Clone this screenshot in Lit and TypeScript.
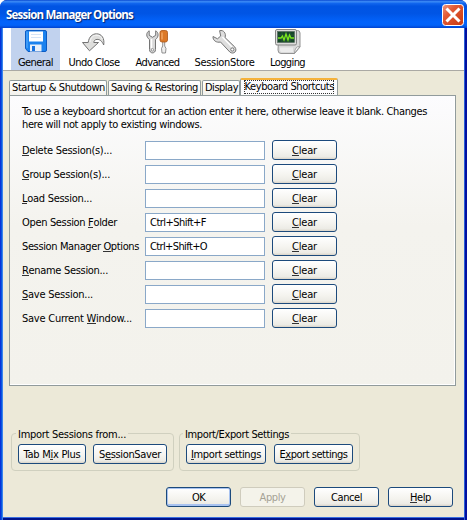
import { LitElement, html, css, svg, nothing } from "lit";
import { customElement, property } from "lit/decorators.js";

/** One line of text set to a given width; "_" precedes the access key. */
@customElement("ui-text")
class UiText extends LitElement {
  @property() text = "";
  @property({ type: Number }) w = 0;
  static styles = css`
    :host { display: block; white-space: pre; flex: none; line-height: 13px; }
    .run { display: inline-block; }
    u { text-decoration: none; box-shadow: 0 1px 0 #333; display: inline-block; height: 11px; line-height: 13px; vertical-align: top; }
  `;
  updated() {
    const run = this.renderRoot.querySelector(".run") as HTMLElement;
    run.style.letterSpacing = "0";
    const n = this.text.replace("_", "").length;
    if (this.w) run.style.letterSpacing = (this.w - run.getBoundingClientRect().width) / n + "px";
  }
  render() {
    const i = this.text.indexOf("_");
    return html`<span class="run">${i < 0
      ? this.text
      : html`${this.text.slice(0, i)}<u>${this.text[i + 1]}</u>${this.text.slice(i + 2)}`}</span>`;
  }
}

@customElement("ui-button")
class UiButton extends LitElement {
  @property() text = "";
  @property({ type: Number }) w = 0;
  @property({ reflect: true }) kind = "";
  static styles = css`
    :host { display: flex; align-items: center; justify-content: center; box-sizing: border-box; width: 65px; height: 20px; flex: none;
      border: 1px solid #1c4a7c; border-radius: 3px; color: #000;
      background: linear-gradient(#fff, #f4f3ee 60%, #ecebe5 88%, #d9d3c8); }
    :host([kind="default"]) { box-shadow: inset 0 0 0 1px #a9c3f0, inset 0 -2px #a9c3f0; }
    :host([kind="off"]) { border-color: #cfccbd; background: #f4f3ea; color: #a5a294; }
  `;
  render() { return html`<ui-text .text=${this.text} .w=${this.w}></ui-text>`; }
}

const floppy = svg`
  <path d="M4.500 2.500H23Q24.500 2.500 24.500 4V22Q24.500 23.500 23 23.500H6L3.500 20.500V4Q3.500 2.500 4.500 2.500Z" fill="#1b82ee" stroke="#0b5bc4"/>
  <path d="M4.500 3.500H5.500V20.500L4.500 19.500Z" fill="#5fb2ff"/>
  <path d="M7 3.500H21V13.500H7Z" fill="#fff"/><path d="M9 6.500H19M9 9.500H19" stroke="#d5e4f7"/>
  <path d="M8 16.500H19.500V23.500H8Z" fill="#e9eff8"/><path d="M10 18H13V23H10Z" fill="#1672df"/>`;
const undo = svg`
  <path d="M2.500 14.500L8.200 14.500C9 8.500 12.500 5.800 16.500 5.800C21.500 5.800 24.800 10 23.700 17C22 13 19.600 11.200 17 11.400C14.700 11.600 14 12.800 13.800 14.500L18.500 14.500L9.500 22.800Z" fill="#dededc" stroke="#747474" stroke-linejoin="round"/>
  <path d="M10 14C10.500 9.500 13.500 7 17 7.200C19.500 7.300 21.500 9 22.200 11" fill="none" stroke="#f8f8f8"/>`;
const advanced = svg`
  <path d="M5.200 2.800C2 4.500 1.800 9 5.500 11.500V21.500C5.500 26 11.500 26 11.500 21.500V11.500C15 9 14.800 4.500 11.700 2.800V7.300L8.500 9.300L5.200 7.300Z" fill="#d9d9d9" stroke="#747474" stroke-linejoin="round"/>
  <path d="M7.500 11V20" stroke="#fff" stroke-width="1.500"/><circle cx="8.500" cy="21.800" r="1.200" fill="#fff" stroke="#777" stroke-width=".7"/>
  <path d="M18.700 13H20.700V18L22 20.500L21.500 25H18L17.500 20.500L18.700 18Z" fill="#eee" stroke="#777" stroke-width=".8"/>
  <rect x="16" y="2.500" width="7.500" height="11.500" rx="2" fill="#dc7928" stroke="#aa5518" stroke-width=".8"/>
  <path d="M18 4.500V11.500" stroke="#f5ad6c" stroke-width="1.300"/>`;
const wrench = svg`
  <path d="M8.600 2.700C12.500 1.500 15.500 5.500 14 9.500L23.800 19C27 23 22.500 27 18.800 24L9.500 14C5.500 15 1.700 12.500 2 8.500L6.500 10.800L9.700 8Z" fill="#dedede" stroke="#747474" stroke-linejoin="round"/>
  <path d="M11.500 9L21 19" stroke="#fff" stroke-width="1.400"/><circle cx="21.300" cy="21.500" r="1.600" fill="#fff" stroke="#777"/>`;
const logging = svg`
  <path d="M5 2.500H23.500Q26 2.500 26 5V19L20.500 25.500H7Q4 25.500 4 22Z" fill="#dadada" stroke="#929292"/>
  <path d="M6 19.500H19V24H7.500Q6 24 6 22Z" fill="#ececec"/>
  <path d="M25.800 18.500Q21 18 20.500 25.300Z" fill="#fff" stroke="#929292" stroke-width=".8"/>
  <rect x="1.500" y="1.500" width="21" height="15.500" rx="1.500" fill="#dcdcda" stroke="#858585"/>
  <rect x="3.500" y="3.500" width="17" height="11" fill="#174529" stroke="#51665a" stroke-width=".6"/>
  <path d="M4 7H20M4 11H20M8 4V14M12 4V14M16 4V14" stroke="#2e6440" stroke-width=".6"/>
  <path d="M4 10H7L8.500 8L10 12L12 6L14 12L15.500 7L17 10H20" fill="none" stroke="#7be81e" stroke-width="1.300"/>`;

const tools = [
  { cls: "general on", text: "General", w: 35, icon: floppy },
  { cls: "undo", text: "Undo Close", w: 51, icon: undo },
  { cls: "advanced", text: "Advanced", w: 44, icon: advanced },
  { cls: "store", text: "SessionStore", w: 60, icon: wrench },
  { cls: "logging", text: "Logging", w: 35, icon: logging },
];
const tabs = [
  { cls: "t1", text: "Startup & Shutdown", w: 93 },
  { cls: "t2", text: "Saving & Restoring", w: 87 },
  { cls: "t3", text: "Display", w: 33 },
  { cls: "t4 sel", text: "Keyboard Shortcuts", w: 89.5 },
];
const rows: [string, number, string, number][] = [
  ["_Delete Session(s)...", 90, "", 0],
  ["_Group Session(s)...", 88, "", 0],
  ["_Load Session...", 70, "", 0],
  ["Open Session _Folder", 95, "Ctrl+Shift+F", 56],
  ["Session Manager _Options", 117, "Ctrl+Shift+O", 57],
  ["_Rename Session...", 86, "", 0],
  ["_Save Session...", 71, "", 0],
  ["Save Current _Window...", 110, "", 0],
];

@customElement("app-root")
class AppRoot extends LitElement {
  static styles = css`
    :host { display: block; width: 467px; height: 520px; background: #fff; overflow: hidden; color: #000;
      font: 11px/13px "DejaVu Sans Condensed", "DejaVu Sans", sans-serif; font-stretch: condensed; }
    * { box-sizing: border-box; }
    .win { display: flex; flex-direction: column; height: 520px; border-radius: 7px 7px 0 0; overflow: hidden;
      background: linear-gradient(90deg, #0831d9 0 1px, #0855dd 1px 2px, #3b82ee 2px 3px, #0000 3px calc(100% - 3px), #2a5fd6 calc(100% - 3px) calc(100% - 2px), #0010a0 calc(100% - 2px)), #00138c; }
    .title { flex: none; height: 28px; display: flex; align-items: center; justify-content: space-between; padding: 2px 3px 0 6px;
      background: linear-gradient(#0a4ad2, #3c8cf7 6%, #1166ee 12%, #0054e3 22%, #0055e5 48%, #0263fb 78%, #0262f8 90%, #0143cf); }
    .title ui-text { font: bold 11.5px/15px "Open Sans", "Noto Sans", sans-serif; font-stretch: normal; color: #fff; text-shadow: 1px 1px 1px #0a246a; margin-top: -1px; }
    .close { display: block; flex: none; }
    .body { flex: 1; margin: 0 3px 3px; background: #ece9d8; display: flex; flex-direction: column; align-items: flex-start; box-shadow: 0 1px #3b6fe0; }
    .tools { align-self: stretch; height: 43px; flex: none; background: #fff; border-bottom: 1px solid #aaa9a4; display: flex; padding-left: 8px; }
    .tool { display: flex; flex-direction: column; align-items: center; height: 42px; flex: none; }
    .tool svg { display: block; flex: none; }
    .tool ui-text { margin-top: 1px; }
    .on { background: #c1d2ee; }
    .general { width: 49px; }
    .undo { width: 68px; }
    .advanced { width: 59px; }
    .store { width: 75px; }
    .logging { width: 51px; }
    .tabs { display: flex; align-items: flex-end; height: 17px; margin: 7px 0 0 6px; flex: none; }
    .tab { height: 15px; border: 1px solid #919b9c; border-bottom: 0; border-radius: 2px 2px 0 0; background: linear-gradient(#fff, #f3f2ed); padding-left: 2px; }
    .t1 { width: 98px; margin-right: 1px; }
    .t2 { width: 93px; margin-right: 1px; }
    .t3 { width: 38px; }
    .sel { width: 98px; height: 17px; border-top: 2px solid #f5b23a; background: #fcfcfe; padding: 0 3px; }
    .focus { height: 14px; border: 1px dotted #333; }
    .focus ui-text { margin: -1px 0 0 -.5px; }
    .panel { width: 447px; height: 291px; flex: none; margin-left: 6px; border: 1px solid #919b9c; box-shadow: inset -1px -1px #fff; padding: 9px 0 0 12px;
      background: linear-gradient(#fcfcfe, #f4f3ee 45%, #f3f2ec); }
    .rows { display: grid; gap: 4px; margin-top: 9px; }
    .row { display: flex; align-items: center; height: 20px; }
    .label { width: 123px; flex: none; }
    .field { width: 120px; height: 19px; border: 1px solid #8aa8c8; background: #fff; padding: 2px 4px; margin-right: 7px; }
    .groups { display: flex; gap: 5px; margin: 39px 0 0 8px; }
    .group { position: relative; height: 46px; padding-top: 8px; }
    .box { height: 38px; border: 1px solid #d0d0bf; border-radius: 4px; display: flex; justify-content: space-between; padding: 10px 6px 0; }
    .g1 { width: 163px; }
    .g2 { width: 181px; }
    .legend { position: absolute; left: 5px; top: 3px; background: #ece9d8; padding: 0 2px; }
    .g2 .legend { left: 4px; }
    .b1 { width: 68px; } .b2 { width: 74px; } .b3 { width: 80px; } .b4 { width: 79px; }
    .actions { display: flex; gap: 9px; margin: 16px 0 0 163px; }
  `;
  render() {
    return html`<div class="win">
      <div class="title">
        <ui-text .text=${"Session Manager Options"} .w=${127}></ui-text>
        <svg class="close" width="22" height="22" viewBox="0 0 22 22">
          <defs><linearGradient id="r" x2="1" y2="1"><stop stop-color="#f09a80"/><stop offset=".35" stop-color="#e25a35"/><stop offset="1" stop-color="#c8380f"/></linearGradient></defs>
          <rect x=".500" y=".500" width="21" height="21" rx="3" fill="url(#r)" stroke="#fff"/>
          <path d="M4.500 4.500L17.500 17.500M17.500 4.500L4.500 17.500" stroke="#fff" stroke-width="3"/>
        </svg>
      </div>
      <div class="body">
        <div class="tools">${tools.map((t) => html`<div class="tool ${t.cls}">
          <svg width="28" height="27" viewBox="0 0 28 27">${t.icon}</svg>
          <ui-text .text=${t.text} .w=${t.w}></ui-text></div>`)}</div>
        <div class="tabs">${tabs.map((t) => html`<div class="tab ${t.cls}">
          <div class=${t.cls.includes("sel") ? "focus" : nothing}><ui-text .text=${t.text} .w=${t.w}></ui-text></div></div>`)}</div>
        <div class="panel">
          <ui-text .text=${"To use a keyboard shortcut for an action enter it here, otherwise leave it blank. Changes"} .w=${405}></ui-text>
          <ui-text .text=${"here will not apply to existing windows."} .w=${180}></ui-text>
          <div class="rows">${rows.map(([l, w, v, vw]) => html`<div class="row">
            <div class="label"><ui-text .text=${l} .w=${w}></ui-text></div>
            <div class="field">${v ? html`<ui-text .text=${v} .w=${vw}></ui-text>` : nothing}</div>
            <ui-button .text=${"_Clear"} .w=${25}></ui-button></div>`)}</div>
        </div>
        <div class="groups">
          <div class="group g1"><div class="box">
            <ui-button class="b1" .text=${"Tab M_ix Plus"} .w=${57}></ui-button>
            <ui-button class="b2" .text=${"S_essionSaver"} .w=${62}></ui-button></div>
            <ui-text class="legend" .text=${"Import Sessions from..."} .w=${108}></ui-text></div>
          <div class="group g2"><div class="box">
            <ui-button class="b3" .text=${"_Import settings"} .w=${70}></ui-button>
            <ui-button class="b4" .text=${"E_xport settings"} .w=${68}></ui-button></div>
            <ui-text class="legend" .text=${"Import/Export Settings"} .w=${104}></ui-text></div>
        </div>
        <div class="actions">
          <ui-button .kind=${"default"} .text=${"OK"} .w=${13}></ui-button>
          <ui-button .kind=${"off"} .text=${"Apply"} .w=${26}></ui-button>
          <ui-button .text=${"Cancel"} .w=${31}></ui-button>
          <ui-button .text=${"_Help"} .w=${21}></ui-button>
        </div>
      </div>
    </div>`;
  }
}
